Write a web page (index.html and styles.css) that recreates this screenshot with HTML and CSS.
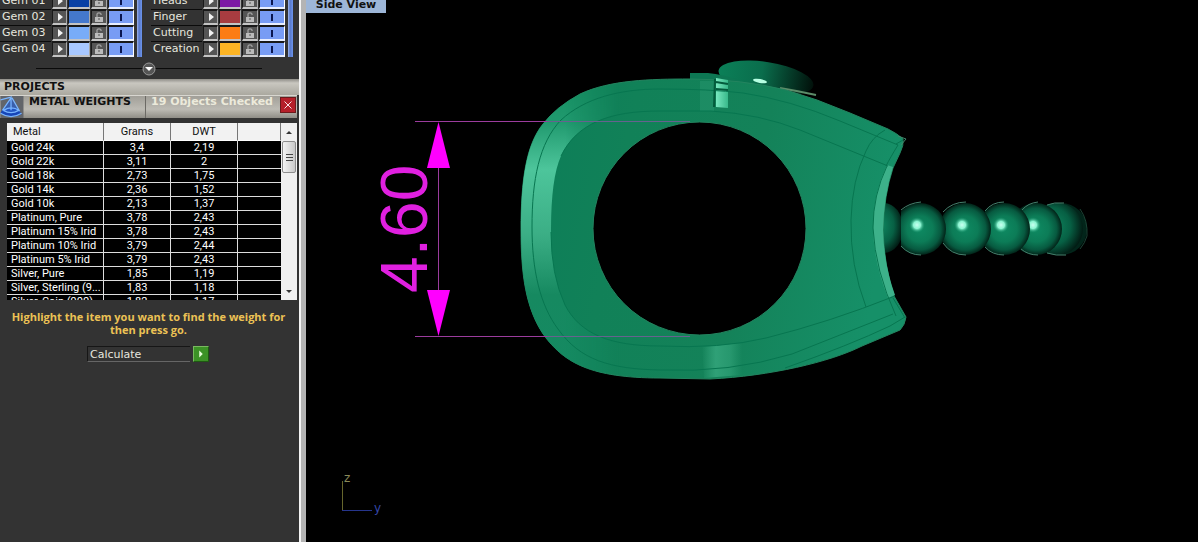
FILE: index.html
```
<!DOCTYPE html>
<html lang="en">
<head>
<meta charset="utf-8">
<title>Metal Weights</title>
<link rel="stylesheet" href="styles.css">
</head>
<body>
<div class="app">
<aside class="sidebar">
  <section class="layers" id="layers"></section>
  <div class="divider"><button class="knob" aria-label="Collapse"><svg viewBox="0 0 14 14"><circle cx="7" cy="7" r="6" fill="#555" stroke="#999"/><path d="M3 5h8L7 9z" fill="#fff"/></svg></button></div>
  <h2 class="projects">PROJECTS</h2>
  <header class="tool">
    <svg class="tool-icon" viewBox="0 0 24 23"><rect width="24" height="23" fill="#62656a"/><path d="M0 18q10 6 22 1l-3-5q-9-4-17 0z" fill="#1746b8"/><path d="M11 2L2 14q8 5 17 1z" fill="#285cc8" opacity=".7"/><path d="M0 4L12 1M11 2L2 15M12 2l8 14M11 2v13M3 15q8 5 16 0q-7-5-16 0M0 18q11 7 22 0" fill="none" stroke="#79b5ff" stroke-width="1.3"/></svg>
    <h3 class="tool-name">METAL WEIGHTS</h3>
    <p class="tool-info">19 Objects Checked</p>
    <button class="close" aria-label="Close"><svg viewBox="0 0 16 16"><path d="M4 4l8 8M12 4l-8 8" stroke="#fff"/></svg></button>
  </header>
  <div class="list">
    <table class="metals">
      <colgroup><col class="c-metal"><col class="c-grams"><col class="c-dwt"><col></colgroup>
      <thead><tr><th>Metal</th><th>Grams</th><th>DWT</th><th></th></tr></thead>
      <tbody>
        <tr><td>Gold 24k</td><td>3,4</td><td>2,19</td><td></td></tr>
        <tr><td>Gold 22k</td><td>3,11</td><td>2</td><td></td></tr>
        <tr><td>Gold 18k</td><td>2,73</td><td>1,75</td><td></td></tr>
        <tr><td>Gold 14k</td><td>2,36</td><td>1,52</td><td></td></tr>
        <tr><td>Gold 10k</td><td>2,13</td><td>1,37</td><td></td></tr>
        <tr><td>Platinum, Pure</td><td>3,78</td><td>2,43</td><td></td></tr>
        <tr><td>Platinum 15% Irid</td><td>3,78</td><td>2,43</td><td></td></tr>
        <tr><td>Platinum 10% Irid</td><td>3,79</td><td>2,44</td><td></td></tr>
        <tr><td>Platinum 5% Irid</td><td>3,79</td><td>2,43</td><td></td></tr>
        <tr><td>Silver, Pure</td><td>1,85</td><td>1,19</td><td></td></tr>
        <tr><td>Silver, Sterling (9...</td><td>1,83</td><td>1,18</td><td></td></tr>
        <tr><td>Silver, Coin (900)</td><td>1,82</td><td>1,17</td><td></td></tr>
      </tbody>
    </table>
    <div class="scroll">
      <button class="arrow" aria-label="Scroll up"><svg viewBox="0 0 16 16"><path d="M5 10l3-3 3 3z" fill="#333"/></svg></button>
      <div class="thumb"><i></i><i></i><i></i></div>
      <button class="arrow last" aria-label="Scroll down"><svg viewBox="0 0 16 16"><path d="M5 7h6l-3 3z" fill="#333"/></svg></button>
    </div>
  </div>
  <p class="hint">Highlight the item you want to find the weight for then press go.</p>
  <div class="calc">
    <label class="calc-label" for="go">Calculate</label>
    <button class="go" id="go"><svg viewBox="0 0 16 16"><path d="M6 4l4 4-4 4z" fill="#eaffdc"/></svg></button>
  </div>
</aside>
<main class="view">
  <h1 class="view-title">Side View</h1>
  <svg class="scene" viewBox="306 0 892 542" preserveAspectRatio="xMinYMin slice">
    <defs>
      <radialGradient id="ball" cx=".5" cy=".5" r=".5" fx=".5" fy=".5">
        <stop offset="0" stop-color="#0e8a62"/><stop offset=".5" stop-color="#0c7c57"/><stop offset=".8" stop-color="#075a40"/><stop offset="1" stop-color="#022318"/>
      </radialGradient>
      <radialGradient id="spark">
        <stop offset="0" stop-color="#c9fff0"/><stop offset=".45" stop-color="#8df5d2"/><stop offset="1" stop-color="#139068" stop-opacity="0"/>
      </radialGradient>
      <radialGradient id="dim" cx=".4" cy=".45" r=".6">
        <stop offset="0" stop-color="#0f8860"/><stop offset=".6" stop-color="#076044"/><stop offset="1" stop-color="#021c14"/>
      </radialGradient>
      <linearGradient id="body" x1="0" x2="1" y1="0" y2=".15">
        <stop offset="0" stop-color="#0c7d58"/><stop offset=".3" stop-color="#118158"/><stop offset=".65" stop-color="#148259"/><stop offset="1" stop-color="#169068"/>
      </linearGradient>
      <linearGradient id="side" x1="0" x2="0" y1="80" y2="378" gradientUnits="userSpaceOnUse">
        <stop offset="0" stop-color="#169062"/><stop offset=".14" stop-color="#20996e"/><stop offset=".3" stop-color="#4dc59b"/><stop offset=".52" stop-color="#3bae85"/><stop offset=".72" stop-color="#168960"/><stop offset="1" stop-color="#158a62"/>
      </linearGradient>
      <linearGradient id="fade" x1="520" x2="700" y1="0" y2="0" gradientUnits="userSpaceOnUse">
        <stop offset="0" stop-color="#fff"/><stop offset=".25" stop-color="#fff"/><stop offset=".55" stop-color="#000"/>
      </linearGradient>
      <mask id="left"><rect x="500" y="60" width="220" height="340" fill="url(#fade)"/></mask>
      <linearGradient id="dome" x1="0" x2="1"><stop offset="0" stop-color="#0b8058"/><stop offset=".45" stop-color="#0a6d4c"/><stop offset="1" stop-color="#01100a"/></linearGradient>
      <linearGradient id="gloss"><stop offset="0" stop-color="#4abc93" stop-opacity="0"/><stop offset=".35" stop-color="#42b58b" stop-opacity=".6"/><stop offset=".7" stop-color="#3aad83" stop-opacity=".5"/><stop offset="1" stop-color="#3aad83" stop-opacity="0"/></linearGradient>
      <linearGradient id="bright"><stop offset="0" stop-color="#78e8bf"/><stop offset="1" stop-color="#38b98a"/></linearGradient>
      <clipPath id="cut"><rect x="901" y="190" width="60" height="80"/></clipPath>
      <clipPath id="cut2"><rect x="880" y="190" width="21" height="80"/></clipPath>
    </defs>
    <g stroke="none">
      <circle cx="1061" cy="229" r="26" fill="#02251a"/>
      <circle cx="1057" cy="229" r="26" fill="url(#dim)"/>
      <circle cx="1036" cy="229" r="26" fill="url(#ball)"/>
      <circle cx="1033" cy="225" r="8" fill="url(#spark)"/>
      <circle cx="1004" cy="229" r="26" fill="url(#ball)"/>
      <circle cx="1001" cy="225" r="8" fill="url(#spark)"/>
      <circle cx="965" cy="229" r="26" fill="url(#ball)"/>
      <circle cx="962" cy="225" r="8" fill="url(#spark)"/>
      <circle cx="920" cy="229" r="26" fill="url(#ball)" clip-path="url(#cut)"/>
      <circle cx="917" cy="225" r="8" fill="url(#spark)"/>
      <ellipse cx="884" cy="228" rx="19" ry="25" fill="url(#dim)" clip-path="url(#cut2)"/>
    </g>
    <path d="M901 210Q909 203 921 202M901 246Q909 255 921 255M943 212Q952 202 966 202M943 243Q951 255 966 255M985 211Q992 202 1004 202M985 247Q992 255 1004 255M1022 210Q1028 203 1038 202M1021 249Q1028 255 1038 255M1047 205Q1054 202 1064 203M1047 253Q1056 256 1066 255" fill="none" stroke="#44806c"/>
    <path d="M1080 209Q1088 220 1087 236Q1085 243 1080 249" fill="none" stroke="#1b4436"/>
    <ellipse cx="766" cy="78" rx="48" ry="16" transform="rotate(9 766 78)" fill="url(#dome)"/>
    <path d="M780 88Q798 91 816 95" fill="none" stroke="#5c8c69" stroke-width="2"/>
    <path d="M690 80V73H708Q722 74 745 82" fill="#0d7753"/>
    <path fill="url(#body)" fill-rule="evenodd" stroke="#23845f" d="M690 79C650 79 610 80 580 94Q556 107 543 124C526 145 521 180 521 230C521 272 525 310 546 338C565 362 590 378 660 378L710 379C770 376 830 362 862 346L900 330Q905 325 906 317L894 296Q884 265 883 230Q884 195 893 168L900 153Q904 145 903 139Q898 134 888 129L850 113L817 100L786 90Q740 79 690 79ZM806 228.500A106.500 106.500 0 1 0 593 228.500A106.500 106.500 0 1 0 806 228.500Z"/>
    <path mask="url(#left)" fill="url(#side)" d="M690 79C650 79 610 80 580 94Q556 107 543 124C526 145 521 180 521 230C521 272 525 310 546 338C565 362 590 378 660 378L700 378V346H660C610 346 580 334 565 305Q551 275 551 230Q551 178 561 156C577 123 610 111 660 111H690Z"/>
    <path fill="#3db18a" d="M887 165L893 167Q884 195 883 230Q884 265 895 295L888 298Q873 260 873 226Q873 194 887 165Z"/>
    <rect x="700" y="81" width="14" height="30" fill="#35a67e" opacity=".3"/>
    <path d="M716 78L728 80V108L716 107Z" fill="url(#bright)"/>
    <path d="M702 347L742 343V375L704 378Z" fill="url(#gloss)"/>
    <g fill="none" stroke="#077650">
      <path d="M743 93Q710 89 660 89C620 89 585 98 561 120C539 143 532 180 532 227C532 270 540 305 558 329C580 360 610 369 660 370Q730 373 792 354L893 314"/>
      <path d="M561 156C577 123 610 111 660 111H711Q760 114 800 130L888 166M551 232Q551 275 565 305C580 334 610 346 660 346Q720 349 766 338Q830 322 895 296"/>
      <path d="M743 93Q790 100 840 121L898 145Q890 158 886 166M866 307Q850 265 851 220Q852 180 866 151Q872 137 885 130M887 166Q873 195 873 228Q875 270 896 316M785 368Q850 345 890 326L905 317M893 298L905 318M903 140L896 144"/>
      <path d="M715 79L714 107M716 89L728 90M716 82L728 84" stroke="#035b3c" stroke-width="2"/>
    </g>
    <ellipse cx="760" cy="81" rx="7" ry="2" transform="rotate(10 760 81)" fill="#b6ffe2"/>
    <path d="M898 136L906 139L901 145" fill="none" stroke="#43876c"/>
    <g stroke="#9b3c9d" stroke-width="1" shape-rendering="crispEdges">
      <path d="M415 121.500H547M415 336.500H547M438.500 160V300"/>
      <path d="M547 121.500H690M547 336.500H690" stroke="#66628f"/>
    </g>
    <path d="M438.500 122L450 168H427ZM438.500 336L450 290H427Z" fill="#ff00ff"/>
    <text class="dimension" transform="translate(427 293) rotate(-90)">4.60</text>
    <path d="M342.500 481V510" stroke="#66662c"/><path d="M342 510.500H372" stroke="#26358c"/>
    <text class="axis" x="344" y="482" fill="#898958">z</text>
    <text class="axis" x="374" y="512" fill="#3446a8">y</text>
  </svg>
</main>
</div>
<script src="layers.js"></script>
</body>
</html>
```
FILE: styles.css
```
* { box-sizing: border-box; }
body, h1, h2, h3, p { margin: 0; }
body { background: #000; font-family: "DejaVu Sans", sans-serif; font-size: 11px; }
button { padding: 0; border: 0; display: block; }
svg { display: block; }
.app { display: flex; min-height: 100vh; }
.sidebar { flex: 0 0 306px; background: #333; border-right: 5px solid #b4b4b4; box-shadow: inset -2px 0 #f4f4f4; }

.layers { height: 57px; overflow: hidden; display: flex; gap: 9px; align-items: flex-end; }
.group { display: flex; gap: 2px; width: 142px; }
.rows { flex: 1; }
.row { display: grid; grid-template-columns: 51px 15px 22px 16px 26px; gap: 1px; height: 16px; align-items: stretch; color: #e6e6de; }
.name { border-bottom: 1px solid #0b0b0b; line-height: 16px; padding-left: 2px; white-space: nowrap; }
.cell { height: 16px; border: 1px solid #191919; border-right-color: #a8a8a8; border-bottom: 2px solid #c4c4c4; border-top-width: 2px; background: #555; display: flex; align-items: center; justify-content: center; }
.cell svg { width: 12px; height: 12px; }
.blue { background: #789cf4; border-right-color: #fff; border-bottom-color: #e8eeff; }
.blue i { width: 2px; height: 7px; background: #0a1650; }
.bar { width: 5px; background: linear-gradient(90deg, #a0b8f0, #5878c8 40%, #6c94ec); }
.navy { background: #0940a4; } .mid { background: #4478cc; } .sky { background: #78acf8; } .pale { background: #a8c8ff; }
.purple { background: #7c18a4; } .red { background: #a83c40; } .orange { background: #fc7c14; } .gold { background: #fcb424; }

.divider { height: 22px; margin: 0 39px 0 36px; padding-top: 1px; display: flex; align-items: center; justify-content: center; background: linear-gradient(#0a0a0a, #0a0a0a) center / 100% 1px no-repeat; }
.knob { width: 14px; height: 14px; background: none; }

.projects { height: 16px; margin-right: 2px; padding-left: 4px; line-height: 16px; font-size: 11px; color: #111; background: linear-gradient(#8f8d87, #c9c7c0 25%, #aaa89f); }
.tool { display: flex; height: 23px; margin-right: 4px; border-top: 1px solid #d8d6d0; background: linear-gradient(#a19f98, #bdbbb4 60%, #8f8d86); }
.tool-icon { width: 24px; height: 22px; }
.tool-name { width: 122px; padding-left: 5px; border-right: 1px solid #6c6a65; font-size: 11px; line-height: 12px; color: #111; }
.tool-info { flex: 1; padding-left: 5px; line-height: 12px; font-weight: bold; color: #eceadb; white-space: nowrap; }
.close { width: 16px; height: 16px; margin: 1px 1px 0 0; background: #b51f29; border: 1px solid #6c1a1c; }

.list { display: flex; height: 177px; margin: 5px 4px 0 7px; overflow: hidden; background: #000; font-family: Roboto, Arial, sans-serif; }
.metals { flex: 1; height: max-content; table-layout: fixed; border-collapse: separate; border-spacing: 0; color: #fff; }
.c-metal { width: 97px; } .c-grams { width: 67px; } .c-dwt { width: 67px; }
.metals th { height: 18px; padding: 1px 0 0; font-weight: normal; line-height: 14px; color: #111; background: #f2f2f2; border-right: 1px solid #777; border-bottom: 1px solid #fff; }
.metals th:first-child { text-align: left; padding-left: 6px; }
.metals td { height: 14px; padding: 0; line-height: 13px; text-align: center; white-space: nowrap; border-right: 1px solid #ddd; border-bottom: 1px solid #ddd; }
.metals td:first-child { text-align: left; padding-left: 4px; }
.metals td:last-child { border-right: 0; }
.scroll { width: 16px; display: flex; flex-direction: column; background: #f0f0f0; }
.arrow { width: 16px; height: 18px; background: none; }
.last { margin-top: auto; }
.thumb { height: 32px; margin: 0 1px; border: 1px solid #8d8d8d; border-radius: 2px; background: linear-gradient(90deg, #f4f4f4, #c9c9c9); display: flex; flex-direction: column; align-items: center; justify-content: center; gap: 2px; }
.thumb i { width: 7px; height: 1px; background: #444; }

.hint { margin: 10px 8px 0 4px; font: bold 11px/13px "Open Sans", sans-serif; text-align: center; color: #ecc255; }
.calc { display: flex; gap: 3px; margin: 10px 0 0 87px; }
.calc-label { width: 103px; height: 16px; padding-left: 2px; line-height: 16px; color: #e6e6de; border: 1px solid #161616; border-right: 0; border-bottom-color: #666; }
.go { width: 16px; height: 16px; background: #3c9226; border: 1px solid #79b95f; border-right-color: #1e5a12; border-bottom-color: #1e5a12; }
.go svg, .close svg { width: 14px; height: 14px; }

.view { position: relative; flex: 1; min-width: 0; overflow: hidden; }
.view-title { position: absolute; left: 0; top: 0; width: 80px; height: 13px; line-height: 9px; text-align: center; font-size: 11px; background: #9db6d8; color: #111; }
.scene { width: 100%; height: 100vh; }
.dimension { font: 66px "Liberation Sans", Arial, sans-serif; fill: #e020e0; }
.axis { font: 12px "DejaVu Sans", sans-serif; }
```
FILE: layers.js
```
const groups = [
  [["Gem 01", "navy"], ["Gem 02", "mid"], ["Gem 03", "sky"], ["Gem 04", "pale"]],
  [["Heads", "purple"], ["Finger", "red"], ["Cutting", "orange"], ["Creation", "gold"]]
];
const play = '<svg viewBox="0 0 12 12"><path d="M4 2l5 4-5 4z" fill="#f2f2f2"/></svg>';
const lock = '<svg viewBox="0 0 12 12"><path d="M2 6h8v5H2z" fill="#bbb"/><path d="M4 6V3q0-1 1-1h2q1 0 1 1v1" fill="none" stroke="#bbb"/><path d="M6 7v2" stroke="#555"/></svg>';
document.getElementById("layers").innerHTML = groups.map(rows =>
  '<div class="group"><div class="rows">' + rows.map(([name, color]) =>
    `<div class="row"><span class="name">${name}</span>
     <button class="cell" aria-label="Select ${name}">${play}</button>
     <button class="cell ${color}" aria-label="${name} color"></button>
     <button class="cell" aria-label="Lock ${name}">${lock}</button>
     <button class="cell blue" aria-label="Show ${name}"><i></i></button></div>`).join("") +
  '</div><div class="bar"></div></div>').join("");
```
